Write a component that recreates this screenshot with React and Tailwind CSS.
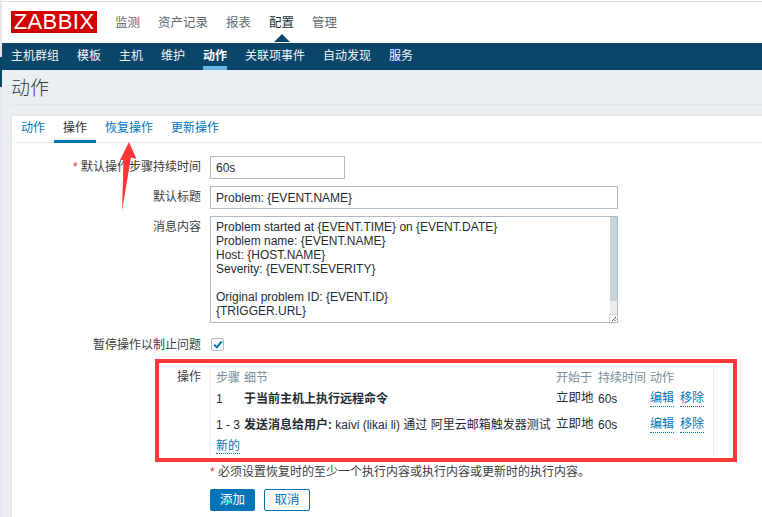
const FONT = "font-['Liberation_Sans','Noto_Sans_CJK_SC',sans-serif]";

const MAIN_MENU = [
  ["监测", false],
  ["资产记录", false],
  ["报表", false],
  ["配置", true],
  ["管理", false],
];
const SUB_MENU = ["主机群组", "模板", "主机", "维护", "动作", "关联项事件", "自动发现", "服务"];
const TABS = ["动作", "操作", "恢复操作", "更新操作"];

const MESSAGE = `Problem started at {EVENT.TIME} on {EVENT.DATE}
Problem name: {EVENT.NAME}
Host: {HOST.NAME}
Severity: {EVENT.SEVERITY}

Original problem ID: {EVENT.ID}
{TRIGGER.URL}`;

function FormRow({ label, required, className, children }) {
  return (
    <div className={`flex ${className || ""}`}>
      <div className="w-[201px] shrink-0 pt-[1px] text-right text-[12px] leading-[20px] text-[#3c3c3c]">
        {required && <span className="text-[#e33734]">* </span>}
        {label}
      </div>
      <div className="ml-[9px] min-w-0 flex-1">{children}</div>
    </div>
  );
}

function DottedLink({ children }) {
  return (
    <a className="border-b border-dotted border-[#0275b8] text-[12px] leading-[15px] text-[#0275b8]">{children}</a>
  );
}

function OperationRow({ step, detail, className }) {
  return (
    <div className={`flex h-[25px] items-center text-[12px] text-[#1f2c33] ${className || ""}`}>
      <div className="w-[28px] shrink-0">{step}</div>
      <div className="w-[312px] shrink-0 whitespace-nowrap">{detail}</div>
      <div className="w-[42px] shrink-0 text-[12.5px]">立即地</div>
      <div className="w-[52px] shrink-0">60s</div>
      <div className="flex gap-[6px] whitespace-nowrap">
        <DottedLink>编辑</DottedLink>
        <DottedLink>移除</DottedLink>
      </div>
    </div>
  );
}

export default function App() {
  return (
    <div className={`relative flex h-[517px] w-[762px] overflow-hidden bg-white ${FONT}`}>
      {/* window edge */}
      <div className="w-[2px] shrink-0 bg-[#e4e7e9]">
        <div className="mt-[57px] h-[30px] bg-[#0a466a]" />
      </div>

      <div className="min-w-0 flex-1">
        <div className="mt-[1px] h-[1px] bg-[#dedede]" />
        <header className="flex h-[41px] items-start pl-[9px] pt-[9px]">
          <div className="flex h-[22px] w-[86px] items-center justify-center bg-[#d40000] text-[22px] leading-none tracking-[0.4px] text-white">
            ZABBIX
          </div>
          <nav className="ml-[18px] flex gap-[18px] pt-[4px] text-[12.5px] leading-[16px]">
            {MAIN_MENU.map(([name, active]) => (
              <span key={name} className={`relative ${active ? "text-[#1f2c33]" : "text-[#5f6a70]"}`}>
                {name}
                {active && (
                  <span className="absolute left-[5px] top-[19px] h-0 w-0 border-x-[8px] border-b-[8px] border-x-transparent border-b-[#0a466a]" />
                )}
              </span>
            ))}
          </nav>
        </header>

        <nav className="flex h-[27px] items-start gap-[18px] bg-[#0a466a] pl-[9px] pt-[5px] text-[12px] leading-[16px] text-[#f2f6f8]">
          {SUB_MENU.map((name) => (
            <span key={name} className={`relative ${name === "动作" ? "font-bold text-white" : ""}`}>
              {name}
              {name === "动作" && <span className="absolute inset-x-0 top-[18px] h-[4px] bg-[#6ab5e8]" />}
            </span>
          ))}
        </nav>

        {/* page body */}
        <main className="h-[447px] bg-[#ebeef0] pl-[9px]">
          <div className="flex h-[35px] items-center border-b border-[#dfe4e7] pt-[5px] text-[19px] font-light text-[#2f3a40]">
            动作
          </div>
          <section className="mt-[10px] h-[410px] border-l border-t border-[#dfe4e7] bg-white">
            <div className="flex h-[27px] items-start border-b border-[#ebeef0] text-[12px] leading-[16px]">
              {TABS.map((name) => (
                <span
                  key={name}
                  className={`h-[27px] whitespace-nowrap px-[9px] pt-[4px] ${
                    name === "操作" ? "border-b-[3px] border-[#0275b8] text-[#1f2c33]" : "text-[#0275b8]"
                  }`}
                >
                  {name}
                </span>
              ))}
            </div>

            <div className="-ml-[12px] pt-[13px]">
              <FormRow label="默认操作步骤持续时间" required>
                <div className="flex h-[23px] w-[135px] items-center border border-[#acbbc7] px-[5px] text-[12px] text-[#1f2c33]">
                  60s
                </div>
              </FormRow>
              <FormRow label="默认标题" className="mt-[7px]">
                <div className="flex h-[23px] w-[408px] items-center border border-[#acbbc7] px-[5px] text-[12px] text-[#1f2c33]">
                  Problem: {"{EVENT.NAME}"}
                </div>
              </FormRow>
              <FormRow label="消息内容" className="mt-[7px]">
                <div className="relative h-[107px] w-[408px] border border-[#acbbc7] pl-[5px] pt-[3px]">
                  <pre className={`text-[12px] leading-[14px] text-[#1f2c33] ${FONT}`}>{MESSAGE}</pre>
                  <div className="absolute bottom-0 right-0 top-0 w-[7px] bg-[#ebebeb]">
                    <div className="h-[84px] bg-[#c9d4da]" />
                  </div>
                  <div className="absolute bottom-0 right-0 flex h-[8px] w-[8px] items-end justify-end border-l border-t border-[#dddddd] bg-white">
                    <svg width="6" height="6" viewBox="0 0 6 6">
                      <path d="M1 5 L5 1 M3.5 5 L5 3.5" stroke="#555" strokeWidth="1" />
                    </svg>
                  </div>
                </div>
              </FormRow>
              <FormRow label="暂停操作以制止问题" className="mt-[11px]">
                <div className="ml-[1px] mt-[4px] flex h-[13px] w-[13px] items-center justify-center rounded-[2px] border border-[#acbbc7]">
                  <svg width="10" height="9" viewBox="0 0 10 9">
                    <path d="M1.2 4.6 L3.8 7.2 L8.8 1.4" fill="none" stroke="#0275b8" strokeWidth="2" />
                  </svg>
                </div>
              </FormRow>
              <FormRow label="操作" className="mt-[11px]">
                <div className="h-[93px] w-[504px] border border-[#ebeef0] pl-[5px]">
                  <div className="flex pt-[3px] text-[12px] leading-[16px] text-[#768d99]">
                    <div className="w-[28px] shrink-0">步骤</div>
                    <div className="w-[312px] shrink-0">细节</div>
                    <div className="w-[42px] shrink-0">开始于</div>
                    <div className="w-[52px] shrink-0">持续时间</div>
                    <div>动作</div>
                  </div>
                  <OperationRow step="1" detail={<span className="font-bold">于当前主机上执行远程命令</span>} />
                  <OperationRow
                    step="1 - 3"
                    className="mt-[1px]"
                    detail={
                      <>
                        <span className="font-bold">发送消息给用户:</span> kaivi (likai li) 通过 阿里云邮箱触发器测试
                      </>
                    }
                  />
                  <div className="leading-[15px]">
                    <DottedLink>新的</DottedLink>
                  </div>
                </div>
                <div className="mt-[5px] text-[12px] leading-[16px] text-[#3c3c3c]">
                  <span className="text-[#e33734]">* </span>
                  必须设置恢复时的至少一个执行内容或执行内容或更新时的执行内容。
                </div>
                <div className="mt-[9px] flex gap-[9px] text-[12.5px]">
                  <button className="h-[22px] w-[45px] rounded-[2px] bg-[#0275b8] text-white">添加</button>
                  <button className="h-[22px] w-[46px] rounded-[2px] border border-[#0275b8] text-[#0275b8]">取消</button>
                </div>
              </FormRow>
            </div>
          </section>
        </main>
      </div>

      {/* annotations drawn on top of the form */}
      <svg className="pointer-events-none absolute left-0 top-0" width="762" height="517" viewBox="0 0 762 517">
        <path d="M129 142 L136.5 159 L131 157.5 L122 211 L123.5 160 L120 160 Z" fill="#fb3838" />
      </svg>
      <div className="pointer-events-none absolute left-[155px] top-[359px] h-[103px] w-[582px] border-[4px] border-[#fb3838]" />
    </div>
  );
}
